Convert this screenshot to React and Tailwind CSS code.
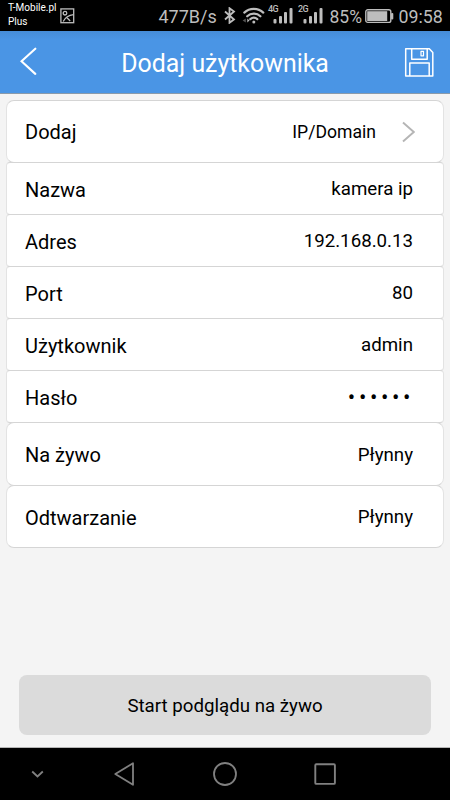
const rows = [
  { label: "Dodaj", value: "IP/Domain", size: "h-[61px] rounded-lg", arrow: true },
  { label: "Nazwa", value: "kamera ip", size: "h-[51px] rounded" },
  { label: "Adres", value: "192.168.0.13", size: "h-[51px] rounded" },
  { label: "Port", value: "80", size: "h-[51px] rounded" },
  { label: "Użytkownik", value: "admin", size: "h-[51px] rounded" },
  { label: "Hasło", value: "••••••", size: "h-[51px] rounded", secret: true },
  { label: "Na żywo", value: "Płynny", size: "h-[62px] rounded-lg" },
  { label: "Odtwarzanie", value: "Płynny", size: "h-[61px] rounded-lg" },
];

function Signal({ label }) {
  return (
    <div className="relative w-[25px] h-[17px] shrink-0">
      <span className="absolute left-0 -top-[3px] text-[9px] leading-[10px] font-medium tracking-[-0.5px]">
        {label}
      </span>
      <svg className="block" width="25" height="17" fill="currentColor">
        <rect x="5.5" y="12" width="3" height="4.5" rx="1" />
        <rect x="11" y="9" width="3" height="7.5" rx="1" />
        <rect x="16" y="5" width="3" height="11.5" rx="1" />
        <rect x="21.5" y="1" width="3" height="15.5" rx="1" />
      </svg>
    </div>
  );
}

function StatusBar() {
  return (
    <div className="h-[31px] shrink-0 bg-black text-[#bdbdbd] flex items-start pl-2">
      <div className="w-[52px] pt-px text-[10px] leading-[14px] text-white whitespace-nowrap">
        <p>T-Mobile.pl</p>
        <p>Plus</p>
      </div>
      <svg className="mt-2 shrink-0" width="15" height="16" fill="none" stroke="currentColor" strokeWidth="1.3">
        <rect x="0.9" y="0.9" width="12.8" height="13.8" />
        <circle cx="5" cy="5.2" r="1.8" />
        <path d="M3.2 13.5C5 9.8 8.200 7.200 13.500 6.600" />
        <path d="M7 9.800l3.200 3.200" />
      </svg>
      <span className="ml-[83.5px] w-[64px] shrink-0 mt-[7px] text-[18px] leading-5">477B/s</span>
      <svg className="mt-[7px] shrink-0" width="14" height="17" fill="none" stroke="currentColor" strokeWidth="1.8">
        <path d="M2 4.5l9 8-4.5 3.3V1.2L11 4.5l-9 8" />
      </svg>
      <svg className="ml-[5px] mt-[7px] shrink-0" width="23" height="17" fill="none" stroke="currentColor" strokeWidth="2.2" strokeLinecap="round">
        <path d="M2.3 5.6a14 14 0 0 1 19 0" />
        <path d="M5.2 9.3a9.5 9.5 0 0 1 13.2 0" />
        <path d="M8.3 12.2a5.4 5.4 0 0 1 7 0" />
        <circle cx="11.8" cy="15" r="1.5" fill="currentColor" stroke="none" />
        <path d="M3.8 11.5v4L.6 13.5z" fill="#555" stroke="none" />
        <path d="M5.3 11.5v4l2.2-2z" fill="currentColor" stroke="none" />
      </svg>
      <div className="flex gap-[5px] ml-[3.5px] mt-[7px]">
        <Signal label="4G" />
        <Signal label="2G" />
      </div>
      <span className="ml-[6.5px] w-[35px] shrink-0 mt-[7px] text-[17.5px] leading-5">85%</span>
      <svg className="mt-[9px] shrink-0" width="29" height="15">
        <rect x="0.8" y="0.8" width="25" height="12.6" rx="2" fill="none" stroke="currentColor" strokeWidth="1.4" />
        <rect x="2.2" y="2.2" width="20" height="9.8" fill="currentColor" />
        <rect x="26" y="4" width="2.3" height="6.5" rx="1" fill="currentColor" />
      </svg>
      <span className="ml-[5px] mt-[7px] text-[17.8px] leading-5">09:58</span>
    </div>
  );
}

function Header() {
  return (
    <header className="h-[63px] shrink-0 bg-[#4a95e5] border-b border-[#8a9aaa] bg-linear-to-b from-[#468cd7] to-[#4a95e5] to-15% flex items-center justify-between pl-5 pr-4 text-white">
      <svg width="30" height="30" fill="none" stroke="currentColor" strokeWidth="2.1" strokeLinecap="round">
        <path d="M15.3 1.7L1.5 14.3l13.8 12.6" />
      </svg>
      <h1 className="pt-[3px] -ml-1 text-[24.9px] leading-8 whitespace-nowrap">Dodaj użytkownika</h1>
      <svg width="30" height="30" fill="none" stroke="currentColor" strokeWidth="1.5" strokeLinejoin="round">
        <path d="M1.7 1.7h23.6l3.5 3.7V29H1.7z" />
        <path d="M7.7 1.7v10.6h15.5V1.7" />
        <rect x="17" y="4.3" width="2.5" height="4.5" strokeWidth="1.2" />
        <path d="M5.8 29V16h19.4v13" />
      </svg>
    </header>
  );
}

function Row({ label, value, size, arrow, secret }) {
  return (
    <div className={`${size} bg-white border border-[#d5d5d5] border-x-[#e3e3e3] -mb-px box-content flex items-center justify-between pl-[18px] text-black ${arrow ? "pr-7" : "pr-[30px]"}`}>
      <span className={`text-[20px] leading-6 ${arrow ? "" : "pt-0.5"}`}>{label}</span>
      {arrow ? (
        <span className="flex items-center gap-[26px]">
          <span className="text-[17.6px] leading-6">{value}</span>
          <svg width="13" height="22" fill="none" stroke="#b5b5b5" strokeWidth="1.9">
            <path d="M1 1.5l10.8 9.5L1 20.5" />
          </svg>
        </span>
      ) : (
        <span className={secret ? "pt-0.5 text-[22px] leading-6 tracking-[3.6px] -mr-px" : "pt-px text-[18.7px] leading-6"}>{value}</span>
      )}
    </div>
  );
}

function NavBar() {
  return (
    <nav className="h-[53px] shrink-0 bg-black border-t border-[#b5b5b5] flex items-center text-[#808080]">
      <svg className="ml-[31px]" width="13" height="9" fill="none" stroke="currentColor" strokeWidth="1.8">
        <path d="M1.2 1.5l5.3 5 5.3-5" />
      </svg>
      <svg className="ml-[70px]" width="22" height="26" fill="none" stroke="currentColor" strokeWidth="1.8" strokeLinejoin="round">
        <path d="M19 2.2v21.6L1.3 13z" />
      </svg>
      <svg className="ml-[76px]" width="26" height="26" fill="none" stroke="currentColor" strokeWidth="1.8">
        <circle cx="13" cy="13" r="11" />
      </svg>
      <svg className="ml-[75px]" width="24" height="24" fill="none" stroke="currentColor" strokeWidth="1.9">
        <rect x="2.3" y="2.3" width="19.6" height="19.6" rx="1" />
      </svg>
    </nav>
  );
}

export default function App() {
  return (
    <div className="w-[450px] h-[800px] bg-[#f4f4f4] flex flex-col overflow-hidden font-[Roboto,sans-serif]">
      <StatusBar />
      <Header />
      <main className="flex-1 flex flex-col pt-1.5 px-1.5">
        {rows.map((row) => (
          <Row key={row.label} {...row} />
        ))}
        <button className="mt-auto mx-[13px] mb-3 pt-[3px] h-[60px] shrink-0 rounded-lg bg-[#dbdbdb] text-[18.7px] text-black">
          Start podglądu na żywo
        </button>
      </main>
      <NavBar />
    </div>
  );
}
